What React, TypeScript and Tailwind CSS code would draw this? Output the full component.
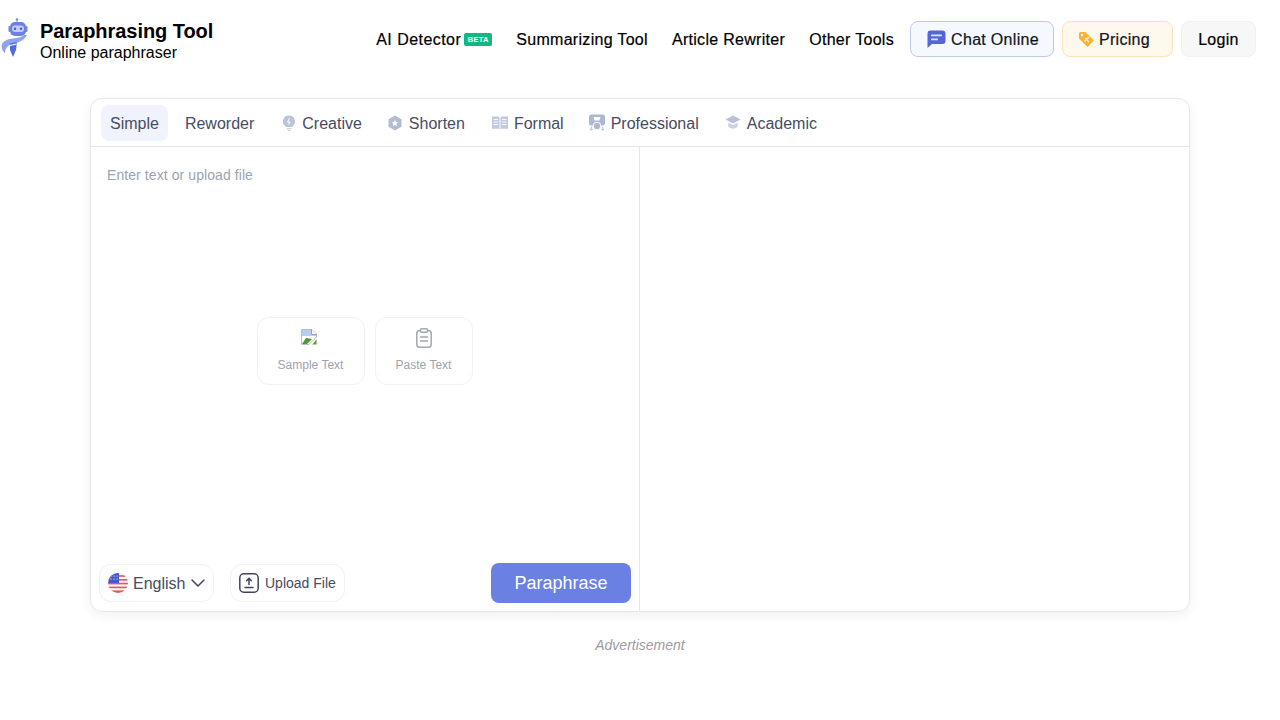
// App.tsx
import React from 'react';

const LogoIcon = () => (
    <svg width="28" height="42" viewBox="0 0 28 42" fill="none">
        <circle cx="16" cy="1.5" r="1.3" fill="#6f86e0" />
        <rect x="15.5" y="2" width="1" height="3" fill="#8ea0ea" />
        <rect x="7.5" y="8" width="2" height="6" rx="1" fill="#6f86e0" />
        <rect x="24.5" y="8" width="2" height="6" rx="1" fill="#6f86e0" />
        <rect x="9" y="4" width="16" height="14" rx="5" fill="#6b82e2" />
        <rect x="11" y="7.5" width="12" height="6.5" rx="3" fill="#c3cdf5" />
        <circle cx="14" cy="10.7" r="1.2" fill="#4a5fc4" />
        <circle cx="20" cy="10.7" r="1.2" fill="#4a5fc4" />
        <path d="M23 17 C18 22 6 18 1 26 C0 29 1 33 4 35 C4 30 8 26 14 25 C20 24 24 21 26 17 Z" fill="#8ea5ee" />
        <path d="M9 25.5 L16 24 L15 32 L12 39 L9 32 Z" fill="#4f6bdc" />
        <path d="M9 27.5 L15.5 26" stroke="#fff" strokeWidth="1.1" />
    </svg>
);

const ChatIcon = () => (
    <svg width="19" height="19" viewBox="0 0 19 19">
        <path d="M3.5 0.5H15.5a3 3 0 0 1 3 3V11a3 3 0 0 1-3 3H5L0.5 18V3.5a3 3 0 0 1 3-3Z" fill="#5566d6" />
        <rect x="4" y="4.5" width="11" height="1.8" rx="0.9" fill="#dfe5fb" />
        <rect x="4" y="8.5" width="7" height="1.8" rx="0.9" fill="#dfe5fb" />
    </svg>
);

const TagIcon = () => (
    <svg width="17" height="17" viewBox="0 0 17 17">
        <path d="M1 2.5A1.5 1.5 0 0 1 2.5 1H7.5L16 9.5 9.5 16 1 7.5Z" fill="#f9b234" />
        <circle cx="4" cy="4" r="1.2" fill="#fff" />
        <path d="M10.5 6.5 7 10M7.5 7.5l3 3" stroke="#fff3d6" strokeWidth="1.2" strokeLinecap="round" />
    </svg>
);

const BulbIcon = () => (
    <svg width="14" height="16" viewBox="0 0 14 16">
        <path d="M7 0.5a6 6 0 0 1 3.5 10.9V12H3.5v-0.6A6 6 0 0 1 7 0.5Z" fill="#bcc4da" />
        <path d="M7.5 3.5 5.5 7H8L6.5 9.5" stroke="#fff" strokeWidth="1" fill="none" />
        <rect x="4.5" y="13" width="5" height="1.2" rx="0.6" fill="#d0d5e4" />
        <rect x="5.5" y="14.8" width="3" height="1.1" rx="0.5" fill="#d0d5e4" />
    </svg>
);

const HexIcon = () => (
    <svg width="16" height="16" viewBox="0 0 16 16">
        <path d="M8 0.5 14.5 4.2V11.8L8 15.5 1.5 11.8V4.2Z" fill="#b4bbd4" />
        <path d="M8 5l1 2 2.2.3-1.6 1.5.4 2.2L8 10l-2 1 .4-2.2L4.8 7.3 7 7Z" fill="#fff" />
    </svg>
);

const BookIcon = () => (
    <svg width="16" height="14" viewBox="0 0 16 14">
        <path d="M0 0.5H6.5L7.5 1.5V13.5L6.5 12.8H0Z" fill="#c3c9de" />
        <path d="M16 0.5H9.5L8.5 1.5V13.5L9.5 12.8H16Z" fill="#c3c9de" />
        <path d="M1.5 3.5H6M1.5 6H6M1.5 8.5H6M10 3.5H14.5M10 6H14.5M10 8.5H14.5" stroke="#fff" strokeWidth="0.9" />
    </svg>
);

const BadgeIcon = () => (
    <svg width="16" height="18" viewBox="0 0 16 18">
        <rect x="0" y="0.5" width="16" height="11" rx="2.5" fill="#aeb6d2" />
        <path d="M4.5 3H11.5L10.5 6.5H5.5Z" fill="#fff" />
        <circle cx="8" cy="12" r="3.8" fill="#aeb6d2" stroke="#fff" strokeWidth="1" />
        <path d="M3 12.5 1.5 16l2.5-.5M13 12.5l1.5 3.5-2.5-.5" stroke="#c3c9de" strokeWidth="1.2" fill="none" />
    </svg>
);

const CapIcon = () => (
    <svg width="16" height="15" viewBox="0 0 16 15">
        <path d="M8 0.5 15.5 4.5 8 8.5 0.5 4.5Z" fill="#b9c0d7" />
        <path d="M3.2 7.4V11.5C5 14.3 11 14.3 12.8 11.5V7.4L8 10Z" fill="#cdd2e2" />
    </svg>
);

const BrokenImage = () => (
    <svg width="16" height="16" viewBox="0 0 16 16">
        <path d="M0.5 0.5H11L15.5 5V8L8 15.5H0.5Z" fill="#fff" stroke="#b9bcc0" strokeWidth="1" />
        <path d="M1 1H10.5L15 5.5V7H1Z" fill="#b8cdf2" />
        <path d="M1 15 L5 9 L11 10 L6 15Z" fill="#4c9a3a" />
        <path d="M11 16 15.5 10.5V15.5H11Z" fill="#4c9a3a" />
        <path d="M10.5 0.5V5.5H15.5" fill="#fff" stroke="#9aa0a6" strokeWidth="1" />
    </svg>
);

const ClipboardIcon = () => (
    <svg width="16" height="20" viewBox="0 0 16 20" fill="none" stroke="#a4a8b3" strokeWidth="1.5">
        <rect x="0.8" y="2.5" width="14.4" height="16.7" rx="3" />
        <rect x="4.5" y="0.8" width="7" height="3.4" rx="1.2" fill="#fff" />
        <path d="M4.5 9H11.5M4.5 13H11.5" strokeLinecap="round" />
    </svg>
);

const FlagIcon = () => (
    <svg width="20" height="20" viewBox="0 0 20 20">
        <defs>
            <clipPath id="flagClip">
                <circle cx="10" cy="10" r="10" />
            </clipPath>
        </defs>
        <g clipPath="url(#flagClip)">
            <rect width="20" height="20" fill="#f4f5fb" />
            <rect y="2.2" width="20" height="1.6" fill="#e8574f" />
            <rect y="6" width="20" height="1.6" fill="#e8574f" />
            <rect y="9.8" width="20" height="1.6" fill="#e8574f" />
            <rect y="13.6" width="20" height="1.6" fill="#e8574f" />
            <rect y="17.4" width="20" height="2.6" fill="#e8574f" />
            <rect width="11" height="10" fill="#4a55c8" />
            <path d="M3 3h.1M6 3h.1M9 3h.1M3 6h.1M6 6h.1M9 6h.1" stroke="#fff" strokeWidth="1.2" strokeLinecap="round" />
        </g>
    </svg>
);

const ChevronIcon = () => (
    <svg width="14" height="8" viewBox="0 0 14 8" fill="none" stroke="#3f4658" strokeWidth="1.5">
        <path d="M1 1 7 7 13 1" strokeLinecap="round" strokeLinejoin="round" />
    </svg>
);

const UploadIcon = () => (
    <svg width="20" height="20" viewBox="0 0 20 20" fill="none" stroke="#3f4658" strokeWidth="1.5">
        <rect x="0.8" y="0.8" width="18.4" height="18.4" rx="4" />
        <path d="M10 11.5V5.5M7.6 7.8 10 5.3 12.4 7.8M6 14.5H14" strokeLinecap="round" />
    </svg>
);

const tabs = [
    { label: 'Simple', icon: null, box: 'bg-[#f0f3fc] rounded-[8px]' },
    { label: 'Reworder', icon: null, box: 'ml-[8px]' },
    { label: 'Creative', icon: <BulbIcon />, box: 'ml-[10px]' },
    { label: 'Shorten', icon: <HexIcon />, box: 'ml-[7px]' },
    { label: 'Formal', icon: <BookIcon />, box: 'ml-[9px]' },
    { label: 'Professional', icon: <BadgeIcon />, box: 'ml-[7px]' },
    { label: 'Academic', icon: <CapIcon />, box: 'ml-[8px]' },
];

const App: React.FC = () => {
    return (
        <div className="w-[1280px] h-[720px] overflow-hidden bg-white text-black font-['Liberation_Sans',Arial,sans-serif]">
            <header className="h-[78px] flex items-center pl-[1px] pr-[24px]">
                <LogoIcon />
                <div className="ml-[11px] pt-[4px]">
                    <div className="text-[20px] leading-[24px] font-bold tracking-[-0.05px]">Paraphrasing Tool</div>
                    <div className="text-[16px] leading-[20px]">Online paraphraser</div>
                </div>
                <nav className="ml-auto flex items-center text-[16px] font-medium tracking-[0.3px] [-webkit-text-stroke:0.2px_black]">
                    <div className="flex items-center gap-[3px]">
                        <span className="pt-[2px] tracking-[0.45px]">AI Detector</span>
                        <span className="bg-[#10b981] text-white text-[7.5px] leading-[13px] h-[13px] w-[28px] text-center rounded-[2px] font-bold [-webkit-text-stroke:0]">BETA</span>
                    </div>
                    <div className="ml-[24px] pt-[2px]">Summarizing Tool</div>
                    <div className="ml-[24px] pt-[2px]">Article Rewriter</div>
                    <div className="ml-[24px] pt-[2px]">Other Tools</div>
                    <div className="ml-[16px] w-[144px] h-[36px] flex items-center justify-center gap-[5px] pl-[2px] rounded-[8px] border border-[#bccbe8] bg-[#f5f9ff] text-[#111827]">
                        <ChatIcon />
                        <span className="pt-[2px]">Chat Online</span>
                    </div>
                    <div className="ml-[8px] w-[111px] h-[36px] flex items-center pl-[15px] gap-[4px] rounded-[8px] border border-[#fbe3bd] bg-[#fff8ec] text-[#111827]">
                        <TagIcon />
                        <span className="pt-[2px]">Pricing</span>
                    </div>
                    <div className="ml-[8px] w-[75px] h-[36px] flex items-center justify-center rounded-[8px] border border-[#f0f1f3] bg-[#f7f7f8]">
                        <span className="pt-[2px]">Login</span>
                    </div>
                </nav>
            </header>

            <main className="mt-[20px] mx-auto w-[1100px] h-[514px] flex flex-col rounded-[12px] border border-[#e5e7eb] shadow-[0_4px_12px_rgba(0,0,0,0.06)]">
                <div className="h-[48px] flex items-center pl-[10px] border-b border-[#e5e7eb] text-[16px] text-[#464c63]">
                    {tabs.map((t) => (
                        <div key={t.label} className={`h-[36px] px-[9px] flex items-center gap-[6px] ${t.box}`}>
                            {t.icon}
                            <span className="pt-[2px]">{t.label}</span>
                        </div>
                    ))}
                </div>
                <div className="flex-1 flex min-h-0">
                    <div className="w-[549px] border-r border-[#e5e7eb] flex flex-col">
                        <div className="pt-[18px] pl-[16px] text-[14px] leading-[20px] tracking-[0.08px] text-[#9ca3af]">Enter text or upload file</div>
                        <div className="flex-1 flex items-center justify-center gap-[10px] pb-[47px] pr-[1px]">
                            <div className="w-[108px] h-[68px] rounded-[12px] border border-[#f0f1f3] flex flex-col items-center pt-[11px]">
                                <div className="h-[20px] -ml-[3px]"><BrokenImage /></div>
                                <div className="mt-[8px] text-[12px] leading-[16px] text-[#9ca3af]">Sample Text</div>
                            </div>
                            <div className="w-[98px] h-[68px] rounded-[12px] border border-[#f0f1f3] flex flex-col items-center pt-[10px]">
                                <div className="h-[21px]"><ClipboardIcon /></div>
                                <div className="mt-[8px] text-[12px] leading-[16px] text-[#9ca3af]">Paste Text</div>
                            </div>
                        </div>
                        <div className="h-[48px] flex items-center pl-[8px] pr-[8px] pb-[8px]">
                            <div className="w-[115px] h-[38px] flex items-center pl-[8px] rounded-[12px] border border-[#f0f1f3] text-[16px] text-[#464c63]">
                                <FlagIcon />
                                <span className="ml-[5px] pt-[2px]">English</span>
                                <span className="ml-[6px]"><ChevronIcon /></span>
                            </div>
                            <div className="ml-[16px] w-[115px] h-[38px] flex items-center pl-[8px] gap-[6px] rounded-[12px] border border-[#f0f1f3] text-[14px] text-[#464c63]">
                                <UploadIcon />
                                Upload File
                            </div>
                            <button className="ml-auto w-[140px] h-[40px] rounded-[8px] bg-[#6a80e3] text-white text-[18px]">Paraphrase</button>
                        </div>
                    </div>
                    <div className="flex-1" />
                </div>
            </main>

            <div className="mt-[23px] text-center text-[14px] leading-[20px] italic text-[#9b9ba0]">Advertisement</div>
        </div>
    );
};

export default App;
